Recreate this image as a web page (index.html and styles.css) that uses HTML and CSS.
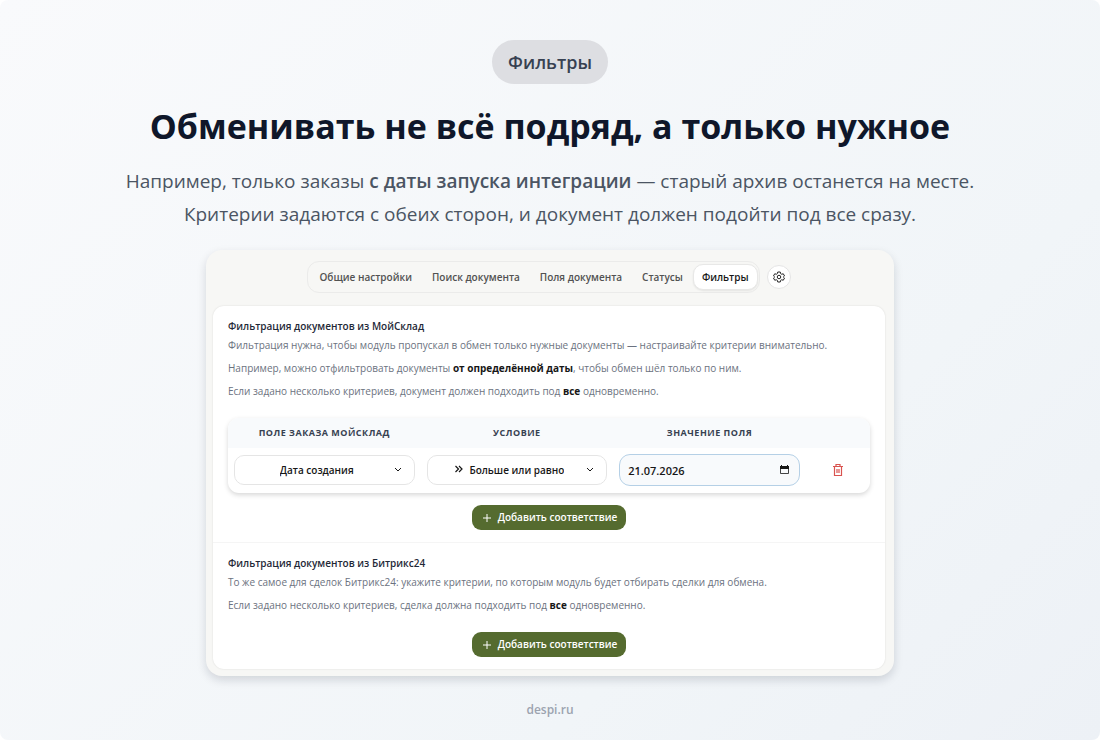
FILE: index.html
```html
<!DOCTYPE html>
<html lang="ru">
<head>
  <meta charset="UTF-8">
  <meta name="viewport" content="width=device-width, initial-scale=1.0">
  <title>Фильтры</title>
  <link rel="stylesheet" href="styles.css">
</head>
<body>
  <main class="slide">
    <span class="badge">Фильтры</span>
    <h1>Обменивать не всё подряд, а только нужное</h1>
    <p class="lead">
      Например, только заказы <strong>с даты запуска интеграции</strong> — старый архив останется на месте.<br>
      Критерии задаются с обеих сторон, и документ должен подойти под все сразу.
    </p>

    <div class="panel">
      <div class="toolbar">
        <nav class="tabs">
          <button type="button" class="tab">Общие настройки</button>
          <button type="button" class="tab">Поиск документа</button>
          <button type="button" class="tab">Поля документа</button>
          <button type="button" class="tab">Статусы</button>
          <button type="button" class="tab active">Фильтры</button>
        </nav>
        <button type="button" class="gear" aria-label="Настройки">
          <svg width="12" height="12" viewBox="0 0 24 24" fill="none" stroke="currentColor" stroke-width="2" stroke-linejoin="round">
            <path d="M9.5 2h5l.7 3.2 2.2 1.3 3.1-1 2.5 4.3-2.4 2.2 2.4 2.2-2.5 4.3-3.1-1-2.2 1.3-.7 3.2h-5l-.7-3.2-2.2-1.3-3.1 1L1 14.200 3.400 12 1 9.800l2.500-4.300 3.100 1 2.200-1.300z"/>
            <circle cx="12" cy="12" r="3.500"/>
          </svg>
        </button>
      </div>

      <div class="card">
        <section class="block">
          <h2>Фильтрация документов из МойСклад</h2>
          <p>Фильтрация нужна, чтобы модуль пропускал в обмен только нужные документы — настраивайте критерии внимательно.</p>
          <p>Например, можно отфильтровать документы <strong>от определённой даты</strong>, чтобы обмен шёл только по ним.</p>
          <p>Если задано несколько критериев, документ должен подходить под <strong>все</strong> одновременно.</p>

          <table class="rules">
            <thead>
              <tr>
                <th id="col-field">Поле заказа МойСклад</th>
                <th id="col-condition">Условие</th>
                <th id="col-value">Значение поля</th>
                <th class="actions"></th>
              </tr>
            </thead>
            <tbody>
              <tr>
                <td>
                  <div class="select">
                    <div class="select-main">
                      <select aria-labelledby="col-field">
                        <option>Дата создания</option>
                      </select>
                    </div>
                    <svg width="10" height="10" viewBox="0 0 10 10" fill="none" stroke="currentColor"><path d="M2 3l3 3 3-3"/></svg>
                  </div>
                </td>
                <td>
                  <div class="select">
                    <div class="select-main">
                      <svg width="10" height="10" viewBox="0 0 10 10" fill="none" stroke="currentColor" stroke-width="1.200"><path d="M1.500 1l3 3-3 3M5 1l3 3-3 3"/></svg>
                      <select aria-labelledby="col-condition">
                        <option>Больше или равно</option>
                      </select>
                    </div>
                    <svg width="10" height="10" viewBox="0 0 10 10" fill="none" stroke="currentColor"><path d="M2 3l3 3 3-3"/></svg>
                  </div>
                </td>
                <td>
                  <div class="date">
                    <input type="text" value="21.07.2026" aria-labelledby="col-value">
                    <button type="button" aria-label="Открыть календарь">
                      <svg width="9" height="10" viewBox="0 0 9 10">
                        <path fill="currentColor" d="M1 0h1v1h5V0h1v1h1v3H0V1h1z"/>
                        <path fill="none" stroke="currentColor" stroke-opacity="0.800" d="M.5 3.500v5h8v-5"/>
                      </svg>
                    </button>
                  </div>
                </td>
                <td class="actions">
                  <button type="button" class="delete" aria-label="Удалить">
                    <svg width="12" height="12" viewBox="0 0 12 12" fill="none" stroke="currentColor" stroke-width="1.200">
                      <path d="M1 2.500h10M4 2.500v-2h4v2M2.500 2.500v9h7v-9M5 5v4M7 5v4"/>
                    </svg>
                  </button>
                </td>
              </tr>
            </tbody>
          </table>

          <button type="button" class="add">
            <svg width="10" height="10" viewBox="0 0 10 10" stroke="currentColor"><path d="M5 1v8M1 5h8"/></svg>
            Добавить соответствие
          </button>
        </section>

        <section class="block">
          <h2>Фильтрация документов из Битрикс24</h2>
          <p>То же самое для сделок Битрикс24: укажите критерии, по которым модуль будет отбирать сделки для обмена.</p>
          <p>Если задано несколько критериев, сделка должна подходить под <strong>все</strong> одновременно.</p>

          <button type="button" class="add">
            <svg width="10" height="10" viewBox="0 0 10 10" stroke="currentColor"><path d="M5 1v8M1 5h8"/></svg>
            Добавить соответствие
          </button>
        </section>
      </div>
    </div>

    <footer>despi.ru</footer>
  </main>
</body>
</html>
```
FILE: styles.css
```css
* {
  box-sizing: border-box;
}
body {
  margin: 0;
  background: #fff;
  font-family: "Open Sans", "Noto Sans", sans-serif;
  color: #111827;
}
button, input, select {
  font: inherit;
  color: inherit;
  border: none;
  background: none;
  padding: 0;
}
button {
  cursor: pointer;
}
svg {
  display: block;
  flex: none;
}
.slide {
  min-height: 100vh;
  padding: 40px 20px 20px;
  display: flex;
  flex-direction: column;
  align-items: center;
  background: linear-gradient(135deg, #f9fafc, #f1f5f8 70%, #edf1f6);
  border-radius: 8px;
}
.badge {
  padding: 8px 16px;
  border-radius: 22px;
  background: #dddee2;
  color: #374151;
  font-size: 18px;
  line-height: 28px;
  font-weight: 600;
}
h1 {
  margin: 20px 0 0;
  font-size: 34px;
  line-height: 44px;
  font-weight: 700;
  color: #0f172a;
  text-align: center;
}
.lead {
  margin: 17px 0 0;
  font-size: 19px;
  line-height: 33px;
  color: #4b5563;
  text-align: center;
}
.lead strong {
  font-weight: 600;
}
.panel {
  width: 100%;
  max-width: 688px;
  margin-top: 19px;
  padding: 11px 9px 7px 7px;
  border-radius: 16px;
  background: #f7f7f5;
  box-shadow: 0 4px 10px rgba(15, 23, 42, 0.15);
}
.toolbar {
  display: flex;
  justify-content: center;
  align-items: center;
  gap: 7px;
  margin-bottom: 13px;
}
.tabs {
  display: flex;
  padding: 2px 1px;
  border: 1px solid #ebebea;
  border-radius: 12px;
}
.tab {
  padding: 0 9px;
  font-size: 10px;
  line-height: 24px;
  font-weight: 600;
  color: #525252;
  border: 1px solid transparent;
  border-radius: 10px;
}
.tab.active {
  padding: 0 8px;
  background: #fff;
  color: #171717;
  border-color: #e8e8e7;
  box-shadow: 0 1px 2px rgba(0, 0, 0, 0.08);
}
.gear {
  display: grid;
  place-items: center;
  width: 24px;
  height: 24px;
  border: 1px solid #e5e5e5;
  border-radius: 50%;
  background: #fff;
  color: #262626;
}
.card {
  border-radius: 11px;
  background: #fff;
  box-shadow: 0 0 2px rgba(0, 0, 0, 0.12);
}
.block {
  padding: 12px 15px;
  font-size: 10px;
  line-height: 17px;
}
.block + .block {
  border-top: 1px solid #f5f5f5;
}
h2 {
  margin: 0;
  font-size: 10px;
  line-height: 17px;
  font-weight: 600;
  color: #1f2937;
}
.block p {
  margin: 2px 0 6px;
  color: #6b7280;
}
.block strong {
  font-weight: 700;
  color: #171717;
}
.rules {
  width: 100%;
  margin: 18px 0 12px;
  table-layout: fixed;
  border-collapse: collapse;
  border-radius: 11px;
  overflow: hidden;
  box-shadow: 0 2px 5px rgba(0, 0, 0, 0.16);
}
.rules th {
  padding: 6px 0 7px;
  background: #f8fafc;
  font-size: 9px;
  line-height: 17px;
  font-weight: 700;
  letter-spacing: 0.5px;
  text-transform: uppercase;
  color: #374151;
}
.rules td {
  padding: 6px 6px 7px;
}
.rules .actions {
  width: 10%;
}
.select {
  display: flex;
  align-items: center;
  height: 30px;
  padding: 0 11px 0 6px;
  border: 1px solid #e5e5e5;
  border-radius: 10px;
  background: #fff;
  color: #171717;
}
.select-main {
  display: flex;
  flex: 1;
  justify-content: center;
  align-items: center;
  gap: 5px;
}
.select select {
  appearance: none;
  font-weight: 600;
}
.date {
  display: flex;
  align-items: center;
  height: 32px;
  padding: 0 10px 0 8px;
  border: 1px solid #b5d0e6;
  border-radius: 11px;
  background: #f8fafc;
  color: #171717;
}
.date input {
  flex: 1;
  min-width: 0;
  font-size: 11px;
  font-weight: 600;
}
.delete {
  display: block;
  margin: 0 auto;
  color: #d9534f;
}
.add {
  display: flex;
  align-items: center;
  gap: 6px;
  margin: 0 auto;
  padding: 0 9px 0 10px;
  border-radius: 9px;
  background: #556b2f;
  color: #fff;
  font-size: 10px;
  line-height: 25px;
  font-weight: 600;
}
.block p + .add {
  margin-top: 18px;
}
footer {
  margin-top: 24px;
  font-size: 12px;
  line-height: 20px;
  font-weight: 600;
  color: #9ca3af;
}
```
